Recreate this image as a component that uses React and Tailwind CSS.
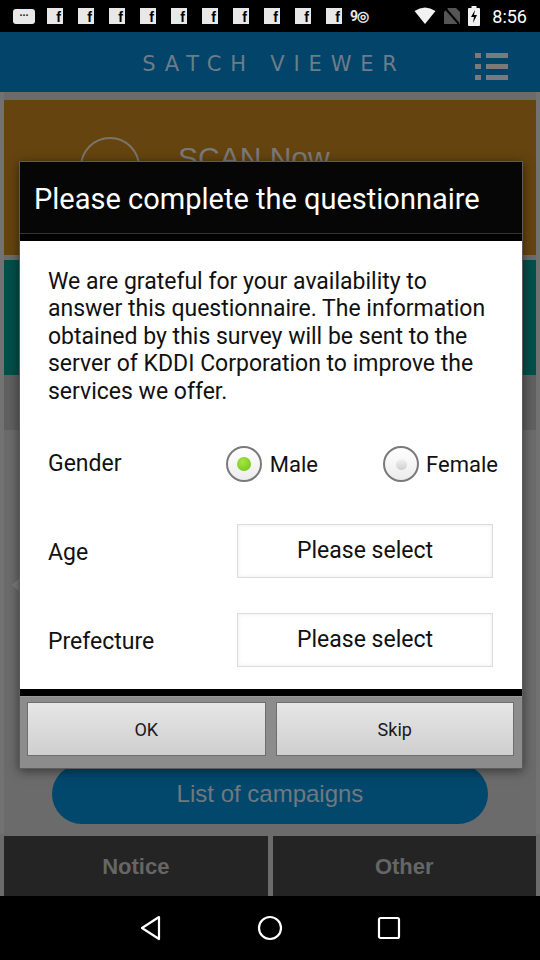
import React from 'react';

const FbIcon = () => (
  <div className="w-[16px] h-[16px] bg-[#e8e8e8] flex items-end justify-end pr-[2px] text-[14px] leading-[14px] font-bold text-black font-['Liberation_Sans',sans-serif]">
    f
  </div>
);

const Radio = ({ checked }) => (
  <div className="w-[36px] h-[36px] rounded-full border-2 border-[#7a7a7a] bg-gradient-to-b from-white to-[#ececec] flex items-center justify-center">
    {checked ? (
      <div className="w-[14px] h-[14px] rounded-full bg-[radial-gradient(circle_at_40%_35%,#a6e640,#6cbf1a)]" />
    ) : (
      <div className="w-[11px] h-[11px] rounded-full bg-gradient-to-b from-[#f2f2f2] to-[#cfcfcf]" />
    )}
  </div>
);

const SelectBox = () => (
  <div className="w-[256px] h-[54px] border border-[#dcdcdc] shadow-[inset_0_0_4px_rgba(0,0,0,0.08)] flex items-center justify-center text-[23px] text-[#111]">
    Please select
  </div>
);

export default function App() {
  return (
    <div className="relative w-[540px] h-[960px] overflow-hidden bg-black font-['Roboto',sans-serif]">
      <div className="flex flex-col h-full">
        {/* status bar */}
        <div className="h-[32px] bg-black flex items-center px-[13px]">
          <div className="w-[22px] h-[15px] rounded-[3px] bg-[#e8e8e8] flex items-center justify-center text-[10px] leading-none font-bold text-black">···</div>
          <div className="flex gap-[15px] ml-[12px]">
            {Array.from({ length: 10 }).map((_, i) => (
              <FbIcon key={i} />
            ))}
          </div>
          <div className="ml-[8px] text-[14px] font-bold text-[#e8e8e8] tracking-[-1px]">9◎</div>
          <div className="ml-auto flex items-center gap-[8px]">
            <svg width="22" height="18" viewBox="0 0 22 18">
              <path d="M11 17 L0.5 4 Q11 -3 21.5 4 Z" fill="#f2f2f2" />
            </svg>
            <svg width="16" height="18" viewBox="0 0 16 18">
              <path d="M4 1 H12 L16 5 V17 H0 V5 Z" fill="#555" />
              <path d="M1 1 L15 17" stroke="#000" strokeWidth="2" />
            </svg>
            <svg width="12" height="20" viewBox="0 0 12 20">
              <rect x="3.5" y="0" width="5" height="2" fill="#f2f2f2" />
              <rect x="0" y="2" width="12" height="18" rx="1" fill="#f2f2f2" />
              <path d="M7 4 L3 11 H6 L5 17 L9 9 H6 Z" fill="#000" />
            </svg>
            <span className="text-[18px] text-white ml-[4px]">8:56</span>
          </div>
        </div>

        {/* header */}
        <div className="h-[60px] bg-[#03446a] flex items-center relative">
          <div className="flex-1 text-center pl-[8px] pt-[6px] text-[21px] tracking-[0.42em] text-[#6b7d88] font-['DejaVu_Sans',sans-serif]">
            SATCH VIEWER
          </div>
          <div className="absolute right-[32px] top-[21px] flex flex-col gap-[6px]">
            {[0, 1, 2].map((i) => (
              <div key={i} className="flex gap-[5px]">
                <div className="w-[6px] h-[5px] bg-[#7a7a7a]" />
                <div className="w-[22px] h-[5px] bg-[#7a7a7a]" />
              </div>
            ))}
          </div>
        </div>

        {/* main content (dimmed) */}
        <div className="flex-1 bg-[#6b6b6b] border-x-[4px] border-[#727272] flex flex-col pt-[8px]">
          <div className="h-[155px] bg-[#654410] flex items-start pl-[76px] pt-[37px] gap-[38px]">
            <div className="w-[60px] h-[60px] rounded-full border-2 border-[#7c7568]" />
            <div className="text-[30px] text-[#7a7a7a] font-['Liberation_Sans',sans-serif] leading-none pt-[6px]">SCAN Now</div>
          </div>
          <div className="h-[115px] bg-[#034f49] mt-[5px]" />
          <div className="h-[55px] bg-[#606060]" />
          <div className="flex-1 relative">
            <div className="absolute left-[8px] top-[148px] w-0 h-0 border-y-[7px] border-y-transparent border-r-[8px] border-r-[#7c7c7c]" />
          </div>
          <div className="mx-[48px] h-[60px] rounded-full bg-[#02486c] flex items-center justify-center text-[24px] text-[#6f7980] font-['Liberation_Sans',sans-serif] mb-[10px]">
            List of campaigns
          </div>
        </div>

        {/* bottom tabs */}
        <div className="h-[62px] bg-[#6b6b6b] flex gap-[5px] px-[4px] pt-[2px]">
          <div className="flex-1 bg-[#242424] flex items-center justify-center text-[22px] font-bold text-[#666] font-['Liberation_Sans',sans-serif]">Notice</div>
          <div className="flex-1 bg-[#242424] flex items-center justify-center text-[22px] font-bold text-[#666] font-['Liberation_Sans',sans-serif]">Other</div>
        </div>

        {/* nav bar */}
        <div className="h-[64px] bg-black flex items-center justify-around px-[92px]">
          <svg width="24" height="26" viewBox="0 0 24 26">
            <path d="M20 2 L3 13 L20 24 Z" fill="none" stroke="#fff" strokeWidth="2.2" strokeLinejoin="round" />
          </svg>
          <svg width="26" height="26" viewBox="0 0 26 26">
            <circle cx="13" cy="13" r="11" fill="none" stroke="#fff" strokeWidth="2.2" />
          </svg>
          <svg width="24" height="24" viewBox="0 0 24 24">
            <rect x="2" y="2" width="20" height="20" rx="1.5" fill="none" stroke="#fff" strokeWidth="2.2" />
          </svg>
        </div>
      </div>

      {/* questionnaire dialog */}
      <div className="absolute left-[19px] top-[161px] w-[504px] border border-[#5c5c5c] shadow-[0_2px_10px_rgba(0,0,0,0.5)] bg-black">
        <div className="h-[71px] bg-[#060606] flex items-center pl-[14px] pt-[4px] text-[29px] text-white">
          Please complete the questionnaire
        </div>
        <div className="h-[1px] bg-[#333]" />
        <div className="h-[7px] bg-black" />
        <div className="bg-white pl-[28px] pr-[24px] pt-[27px] pb-[22px]">
          <p className="text-[23px] leading-[27.4px] text-[#111]">
            We are grateful for your availability to answer this questionnaire. The information obtained by this survey will be sent to the server of KDDI Corporation to improve the services we offer.
          </p>
          <div className="flex items-center h-[50px] mt-[34px] text-[22px] text-[#111]">
            <div className="w-[182px] text-[23px]">Gender</div>
            <div className="w-[161px] flex items-center gap-[8px]">
              <Radio checked />
              <span>Male</span>
            </div>
            <div className="flex items-center gap-[7px]">
              <Radio />
              <span>Female</span>
            </div>
          </div>
          <div className="flex items-center mt-[35px] text-[23px] text-[#111]">
            <div className="w-[189px] pt-[4px]">Age</div>
            <SelectBox />
          </div>
          <div className="flex items-center mt-[35px] text-[23px] text-[#111]">
            <div className="w-[189px] pt-[4px]">Prefecture</div>
            <SelectBox />
          </div>
        </div>
        <div className="h-[7px] bg-black" />
        <div className="bg-[#8c8c8c] flex gap-[10px] pl-[7px] pr-[8px] pt-[5px] pb-[12px] border-t border-[#9a9a9a]">
          <div className="flex-1 h-[54px] border border-[#6e6e6e] bg-gradient-to-b from-[#e6e6e6] to-[#cfcfcf] flex items-center justify-center text-[18px] text-[#1a1a1a]">OK</div>
          <div className="flex-1 h-[54px] border border-[#6e6e6e] bg-gradient-to-b from-[#e6e6e6] to-[#cfcfcf] flex items-center justify-center text-[18px] text-[#1a1a1a]">Skip</div>
        </div>
      </div>
    </div>
  );
}
